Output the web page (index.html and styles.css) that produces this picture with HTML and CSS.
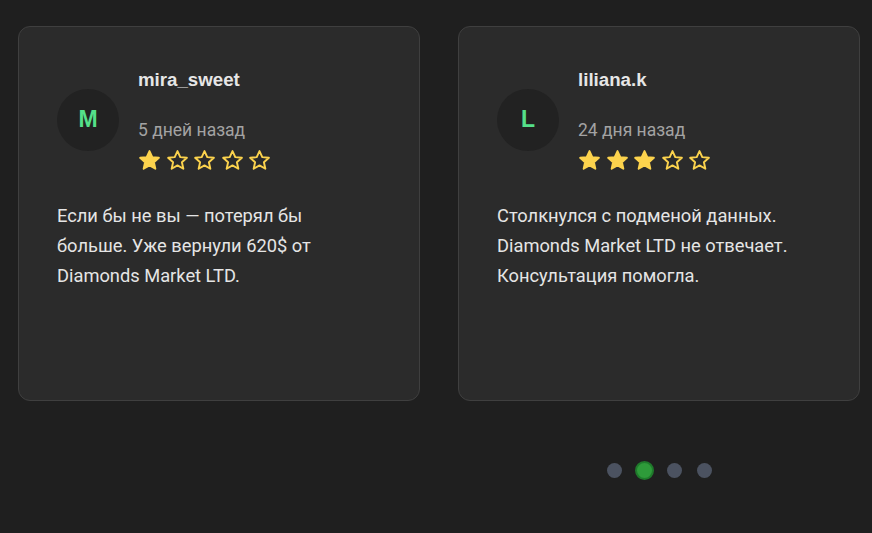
FILE: index.html
```html
<!DOCTYPE html>
<html lang="ru">
<head>
<meta charset="utf-8">
<title>Отзывы</title>
<link rel="stylesheet" href="styles.css">
</head>
<body>
<svg width="0" height="0" class="defs">
  <defs>
    <symbol id="star" viewBox="0 0 24 24">
      <path d="M12 2.2l2.9 6.3 6.9.7-5.2 4.6 1.5 6.8L12 17.1l-6.1 3.5 1.5-6.8-5.2-4.6 6.9-.7z"/>
    </symbol>
  </defs>
</svg>
<div class="carousel">
  <div class="track">
    <div class="card">
      <div class="head">
        <div class="avatar">M</div>
        <div class="info">
          <div class="name">mira_sweet</div>
          <div class="date">5 дней назад</div>
          <div class="stars">
            <svg class="star full"><use href="#star"/></svg>
            <svg class="star"><use href="#star"/></svg>
            <svg class="star"><use href="#star"/></svg>
            <svg class="star"><use href="#star"/></svg>
            <svg class="star"><use href="#star"/></svg>
          </div>
        </div>
      </div>
      <p class="text">Если бы не вы — потерял бы больше. Уже вернули 620$ от Diamonds Market LTD.</p>
    </div>
    <div class="card">
      <div class="head">
        <div class="avatar">L</div>
        <div class="info">
          <div class="name">liliana.k</div>
          <div class="date">24 дня назад</div>
          <div class="stars">
            <svg class="star full"><use href="#star"/></svg>
            <svg class="star full"><use href="#star"/></svg>
            <svg class="star full"><use href="#star"/></svg>
            <svg class="star"><use href="#star"/></svg>
            <svg class="star"><use href="#star"/></svg>
          </div>
        </div>
      </div>
      <p class="text">Столкнулся с подменой данных. Diamonds Market LTD не отвечает. Консультация помогла.</p>
    </div>
  </div>
  <div class="dots">
    <span class="dot"></span>
    <span class="dot active"></span>
    <span class="dot"></span>
    <span class="dot"></span>
  </div>
</div>
</body>
</html>
```

FILE: styles.css
```css
html, body {
  margin: 0;
  padding: 0;
  background: #1f1f1f;
  overflow: hidden;
}
body {
  font-family: Roboto, "Liberation Sans", sans-serif;
  width: 872px;
  height: 533px;
}
.defs {
  position: absolute;
  width: 0;
  height: 0;
}
.carousel {
  box-sizing: border-box;
  width: 1300px;
  padding: 26px 0 0 18px;
}
.track {
  display: flex;
  gap: 38px;
}
.card {
  flex: 0 0 402px;
  box-sizing: border-box;
  height: 375px;
  background: #2b2b2b;
  border: 1px solid #3f3f3f;
  border-radius: 12px;
  padding: 40px 46px 40px 38px;
}
.head {
  display: flex;
  align-items: center;
  gap: 19px;
}
.avatar {
  width: 62px;
  height: 62px;
  border-radius: 50%;
  background: #222222;
  color: #55e08a;
  font-family: "Liberation Sans", Arial, sans-serif;
  font-weight: 700;
  font-size: 23px;
  display: flex;
  align-items: center;
  justify-content: center;
  flex-shrink: 0;
}
.info {
  display: flex;
  flex-direction: column;
}
.name {
  font-family: "Liberation Sans", Arial, sans-serif;
  font-weight: 700;
  font-size: 18.7px;
  line-height: 26px;
  color: #e6e6e6;
}
.date {
  margin-top: 25px;
  font-size: 17.5px;
  line-height: 24px;
  color: #a3a3a3;
}
.stars {
  display: flex;
  gap: 4.5px;
  margin-top: 7px;
}
.star {
  width: 23px;
  height: 23px;
  fill: none;
  stroke: #fcd34d;
  stroke-width: 2;
  stroke-linejoin: round;
}
.star.full {
  fill: #fcd34d;
}
.text {
  margin: 29px 0 0;
  font-size: 18.3px;
  line-height: 30px;
  color: #e5e5e5;
}
.dots {
  display: flex;
  justify-content: center;
  align-items: center;
  gap: 15px;
  margin-top: 60px;
}
.dot {
  width: 15px;
  height: 15px;
  border-radius: 50%;
  background: #4b5260;
}
.dot.active {
  background: #2e9b3a;
  border: 2px solid #1f7a2b;
  margin: 0 -2px;
}
```
